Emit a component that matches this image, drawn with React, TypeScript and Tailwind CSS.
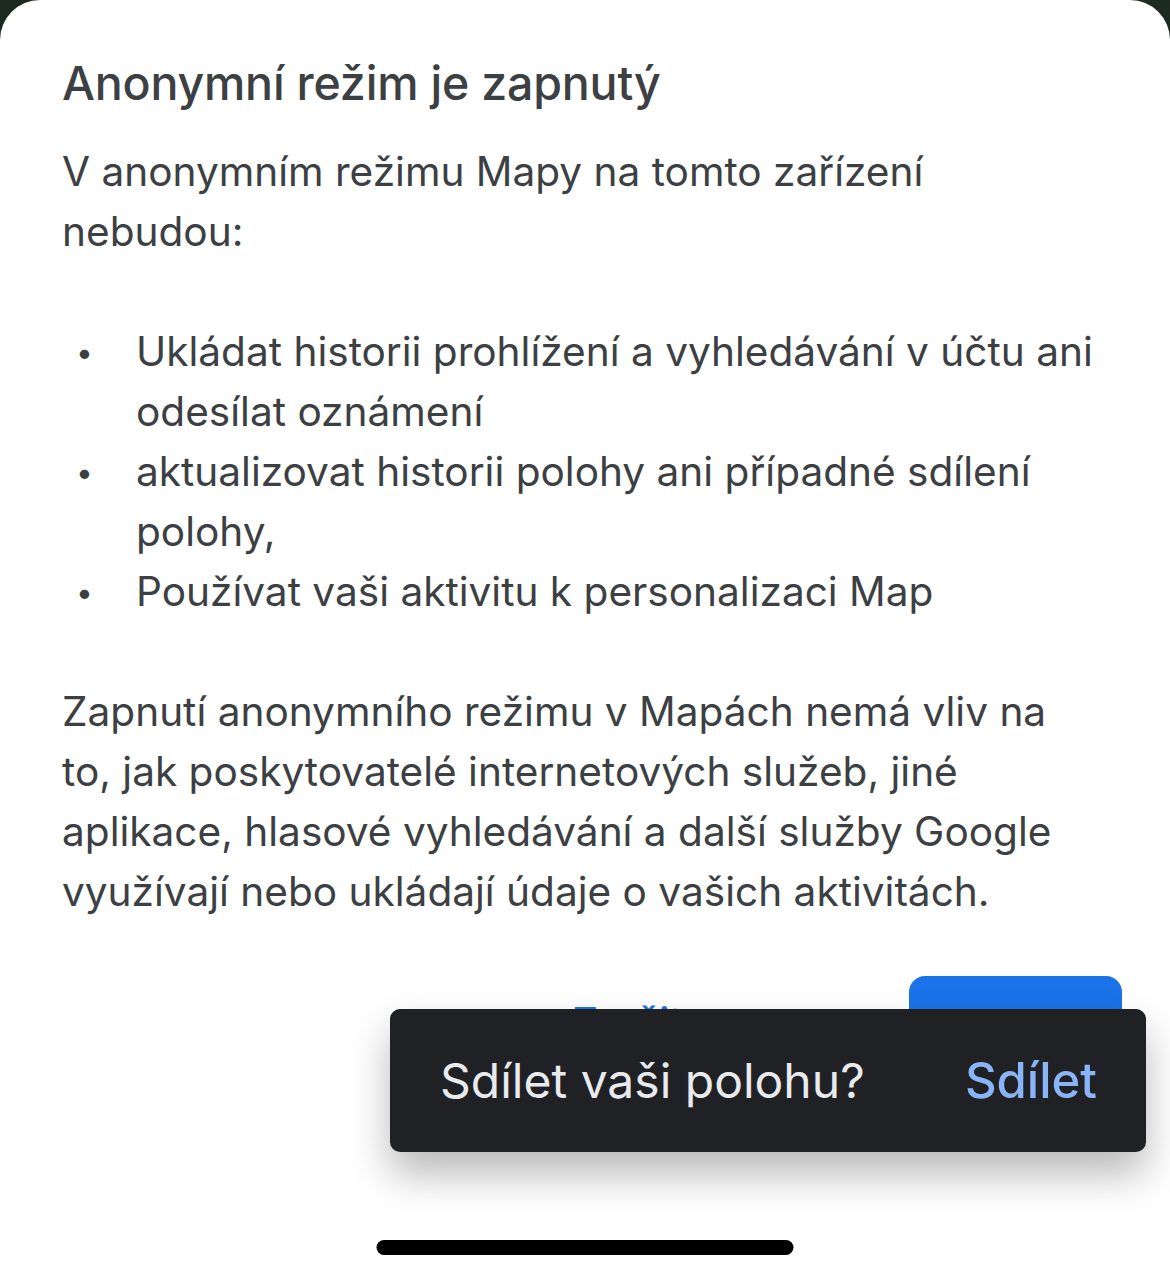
import React from "react";

const items = [
  "Ukládat historii prohlížení a vyhledávání v účtu ani odesílat oznámení",
  "aktualizovat historii polohy ani případné sdílení polohy,",
  "Používat vaši aktivitu k personalizaci Map",
];

const App = () => {
  return (
    <div className="min-h-screen bg-[#1d2a20] font-['Inter',sans-serif]">
      <div className="relative h-[1279px] bg-white rounded-t-[40px] overflow-hidden text-[#3c4043]">
        <div className="pl-[62px] pt-[53px] pr-[64px]">
          <h1 className="text-[46.5px] leading-[60px] font-medium tracking-[-0.2px]">
            Anonymní režim je zapnutý
          </h1>
          <div className="mt-[29px] text-[40.6px] leading-[60px]">
            <p>V anonymním režimu Mapy na tomto zařízení nebudou:</p>
            <ul className="mt-[60px]">
              {items.map((t) => (
                <li key={t} className="flex">
                  <span className="w-[74px] shrink-0 pl-[14px] text-[30px]">•</span>
                  <span>{t}</span>
                </li>
              ))}
            </ul>
            <p className="mt-[60px]">
              Zapnutí anonymního režimu v Mapách nemá vliv na to, jak poskytovatelé internetových služeb, jiné
              aplikace, hlasové vyhledávání a další služby Google využívají nebo ukládají údaje o vašich aktivitách.
            </p>
          </div>

          {/* dialog buttons, mostly under the snackbar */}
          <div className="mt-[54px] -mr-[16px] flex items-center justify-end gap-[226px]">
            <span className="mt-[2px] text-[40px] font-medium text-[#1a73e8]">Zrušit</span>
            <div className="w-[213px] h-[90px] pt-[6px] rounded-[16px] bg-[#1a73e8] flex items-center justify-center text-[40px] font-medium text-white">
              Zapnout
            </div>
          </div>
        </div>

        {/* snackbar */}
        <div className="absolute left-[390px] top-[1009px] w-[756px] h-[143px] rounded-[10px] bg-[#202124] flex items-center justify-between pl-[50px] pr-[49px] shadow-[0_22px_40px_rgba(0,0,0,0.28)]">
          <span className="text-[48px] text-[#e8eaed]">Sdílet vaši polohu?</span>
          <span className="text-[49px] font-medium text-[#8ab4f8]">Sdílet</span>
        </div>

        {/* home indicator */}
        <div className="absolute left-1/2 -translate-x-1/2 top-[1240px] w-[417px] h-[15px] rounded-full bg-black" />
      </div>
    </div>
  );
};

export default App;
